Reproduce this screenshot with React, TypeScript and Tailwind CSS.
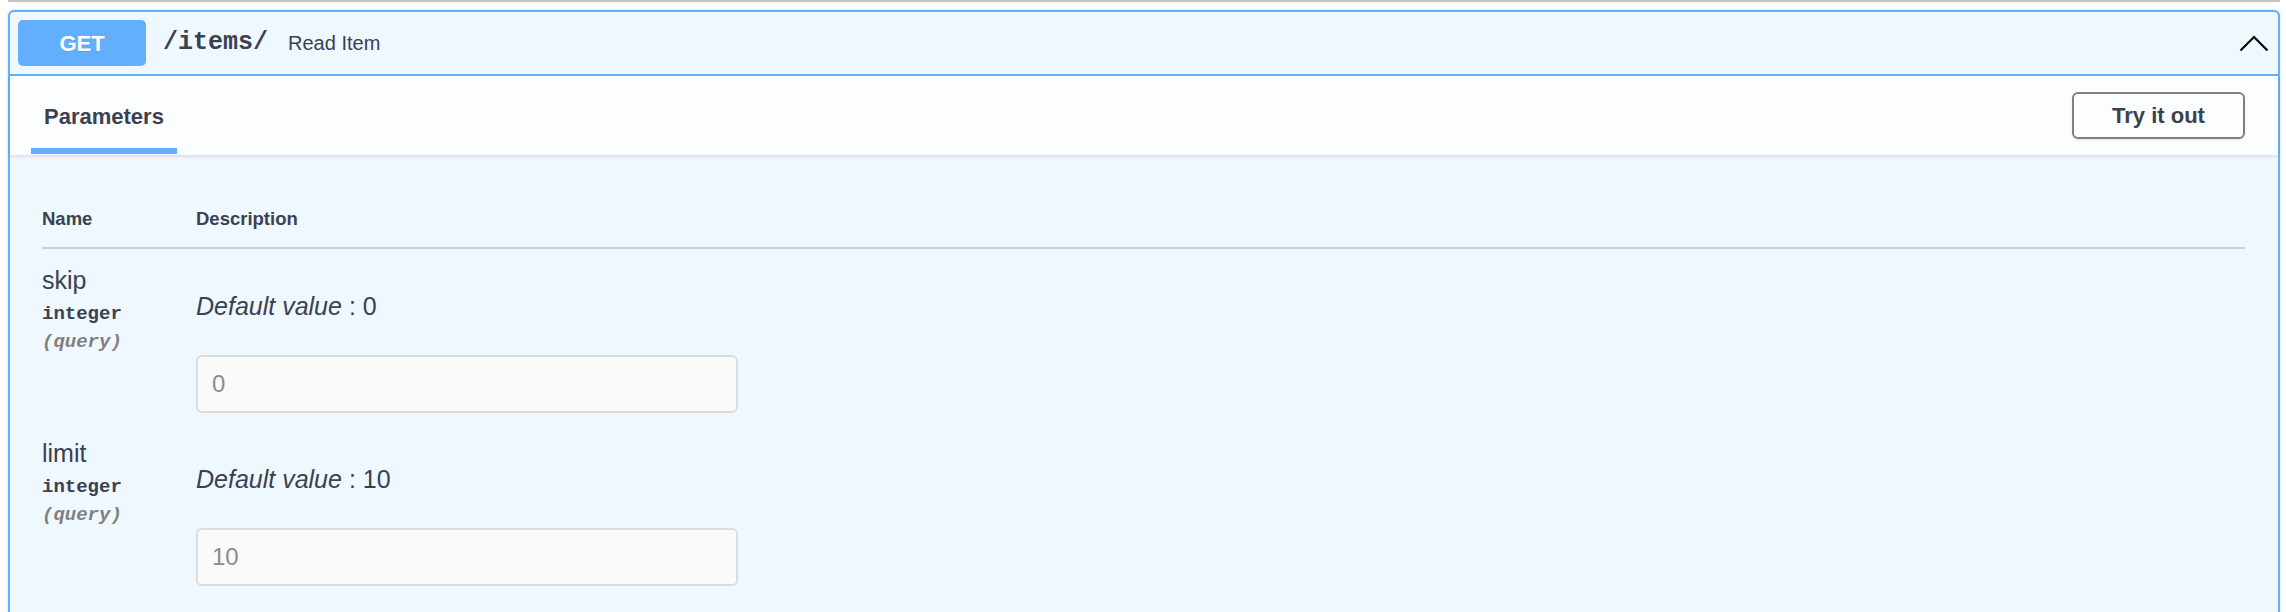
const sans = "font-['Liberation_Sans','Helvetica',sans-serif]";
const mono = "font-['Liberation_Mono','Courier_New',monospace]";

type Param = { name: string; type: string; location: string; defaultValue: string };

const params: Param[] = [
  { name: "skip", type: "integer", location: "(query)", defaultValue: "0" },
  { name: "limit", type: "integer", location: "(query)", defaultValue: "10" },
];

function ChevronUp() {
  return (
    <svg width="30" height="17" viewBox="0 0 30 17" fill="none" aria-hidden="true">
      <polyline points="1.5,15.5 15,2 28.5,15.5" stroke="#000" strokeWidth="2.2" strokeLinejoin="miter" />
    </svg>
  );
}

function ParamRow({ p }: { p: Param }) {
  return (
    <div className="flex pt-[17px] pb-[9px]">
      <div className="w-[154px] shrink-0">
        <div className="text-[25px] leading-[29px] text-[#3b4151]">{p.name}</div>
        <div className={`${mono} pt-[5px] text-[19px] font-bold leading-[28px] text-[#3b4151]`}>{p.type}</div>
        <div className={`${mono} text-[19px] font-semibold italic leading-[28px] text-[#808080]`}>{p.location}</div>
      </div>
      <div className="flex flex-col pt-[26px]">
        <div className="text-[25px] leading-[29px] text-[#3b4151]">
          <i>Default value</i> : {p.defaultValue}
        </div>
        <input
          readOnly
          placeholder={p.defaultValue}
          className={`${sans} mt-[34px] h-[58px] w-[542px] rounded-[6px] border-2 border-[#dcdcdc] bg-[#fafafa] px-[14px] text-[24px] text-[#3b4151] placeholder:text-[#8c8c8c] outline-none`}
        />
      </div>
    </div>
  );
}

export default function App() {
  return (
    <div className={`${sans} h-[612px] w-[2286px] overflow-hidden bg-white`}>
      <div className="ml-[8px] mr-[6px] h-[2px] bg-[#c4c4c8]" />

      <div className="ml-[8px] mr-[6px] mt-[8px] rounded-[6px] border-2 border-[#61affe] bg-[#eff7ff] shadow-[0_0_3px_rgba(0,0,0,0.19)]">
        {/* summary */}
        <div className="flex h-[64px] items-center border-b-2 border-[#61affe] pl-[8px] pr-[9px]">
          <span className="flex h-[46px] w-[128px] items-center justify-center rounded-[5px] bg-[#61affe] text-[22px] font-bold text-white [text-shadow:0_1px_0_rgba(0,0,0,0.1)]">
            GET
          </span>
          <span className={`${mono} ml-[17px] text-[25px] font-bold text-[#3b4151]`}>/items/</span>
          <span className="ml-[20px] text-[20px] text-[#3b4151]">Read Item</span>
          <span className="ml-auto flex items-center">
            <ChevronUp />
          </span>
        </div>

        {/* section header */}
        <div className="relative z-10 flex h-[79px] items-center bg-[#fcfdff] pl-[21px] pr-[33px] shadow-[0_2px_3px_rgba(0,0,0,0.1)]">
          <div className="flex h-full flex-col px-[13px]">
            <span className="mt-[28px] text-[22px] font-bold leading-[25px] text-[#3b4151]">Parameters</span>
            <span className="-mx-[13px] mt-auto mb-[1px] h-[6px] bg-[#61affe]" />
          </div>
          <button className="ml-auto h-[47px] w-[173px] rounded-[6px] border-2 border-[#808080] bg-transparent text-[22px] font-bold text-[#3b4151] shadow-[0_1px_2px_rgba(0,0,0,0.1)]">
            Try it out
          </button>
        </div>

        {/* parameters table */}
        <div className="pl-[32px] pr-[33px] pt-[53px] pb-[40px]">
          <div className="flex border-b-2 border-[#c8d0dc] pb-[18px] text-[18.5px] font-bold leading-[21px] text-[#3b4151]">
            <div className="w-[154px] shrink-0">Name</div>
            <div>Description</div>
          </div>
          {params.map((p) => (
            <ParamRow key={p.name} p={p} />
          ))}
        </div>
      </div>
    </div>
  );
}
